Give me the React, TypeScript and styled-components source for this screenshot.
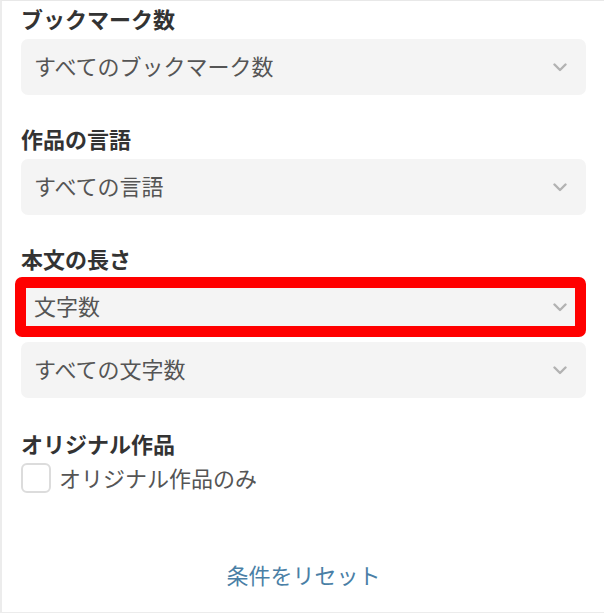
import React from "react";
import styled, { createGlobalStyle } from "styled-components";

const GlobalStyle = createGlobalStyle`
  html, body { margin: 0; padding: 0; background: #fff; }
  body { font-family: "Noto Sans CJK JP", "Noto Sans", sans-serif; }
  * { box-sizing: border-box; }
`;

const Panel = styled.div`
  width: 620px;
  height: 613px;
  border-top: 1px solid #e8e8e8;
  border-left: 2px solid #ececec;
  border-bottom: 1px solid #ececec;
  padding: 4px 0 0 19px;
  display: flex;
  flex-direction: column;
`;

const Inner = styled.div`
  width: 565px;
  display: flex;
  flex-direction: column;
`;

const Section = styled.section<{ $mb: number }>`
  display: flex;
  flex-direction: column;
  gap: 6px;
  margin-bottom: ${(p) => p.$mb}px;
`;

const Heading = styled.h3`
  margin: 0;
  font-size: 22px;
  line-height: 26px;
  padding-bottom: 2px;
  font-weight: 700;
  color: #333;
`;

const SelectStack = styled.div`
  display: flex;
  flex-direction: column;
  gap: 7px;
`;

const SelectBox = styled.div`
  position: relative;
  height: 56px;
  background: #f4f4f4;
  border-radius: 7px;
  display: flex;
  align-items: center;
  justify-content: space-between;
  padding: 0 19px 0 13px;
  font-size: 22px;
  color: #555;
`;

const SelectLabel = styled.span`
  line-height: 26px;
  padding-bottom: 5px;
`;

const Highlight = styled.div`
  position: absolute;
  left: -6px;
  top: -2px;
  right: 0;
  bottom: -2px;
  border: 11px solid #ff0000;
  border-radius: 7px;
  pointer-events: none;
`;

const Chevron = () => (
  <svg width="14" height="9" viewBox="0 0 14 9">
    <polyline points="1.5,1.5 7,7 12.5,1.5" fill="none" stroke="#b2b2b2" strokeWidth="2.4" strokeLinecap="round" strokeLinejoin="round" />
  </svg>
);

const CheckRow = styled.label`
  display: flex;
  align-items: center;
  gap: 8px;
  margin-top: -1px;
  font-size: 22px;
  color: #555;
`;

const CheckText = styled.span`
  line-height: 26px;
  padding-bottom: 2px;
`;

const CheckBox = styled.span`
  width: 30px;
  height: 30px;
  border: 2.5px solid #dcdcdc;
  border-radius: 6px;
  background: #fff;
`;

const Reset = styled.div`
  margin-top: 67px;
  text-align: center;
  font-size: 22px;
  line-height: 28px;
  color: #4a7fa6;
`;

const Select = ({ label, highlight }: { label: string; highlight?: boolean }) => (
  <SelectBox>
    <SelectLabel>{label}</SelectLabel>
    <Chevron />
    {highlight && <Highlight />}
  </SelectBox>
);

export default function App() {
  return (
    <>
      <GlobalStyle />
      <Panel>
        <Inner>
          <Section $mb={30}>
            <Heading>ブックマーク数</Heading>
            <Select label="すべてのブックマーク数" />
          </Section>
          <Section $mb={30}>
            <Heading>作品の言語</Heading>
            <Select label="すべての言語" />
          </Section>
          <Section $mb={32}>
            <Heading>本文の長さ</Heading>
            <SelectStack>
              <Select label="文字数" highlight />
              <Select label="すべての文字数" />
            </SelectStack>
          </Section>
          <Section $mb={0}>
            <Heading>オリジナル作品</Heading>
            <CheckRow>
              <CheckBox />
              <CheckText>オリジナル作品のみ</CheckText>
            </CheckRow>
          </Section>
          <Reset>条件をリセット</Reset>
        </Inner>
      </Panel>
    </>
  );
}
